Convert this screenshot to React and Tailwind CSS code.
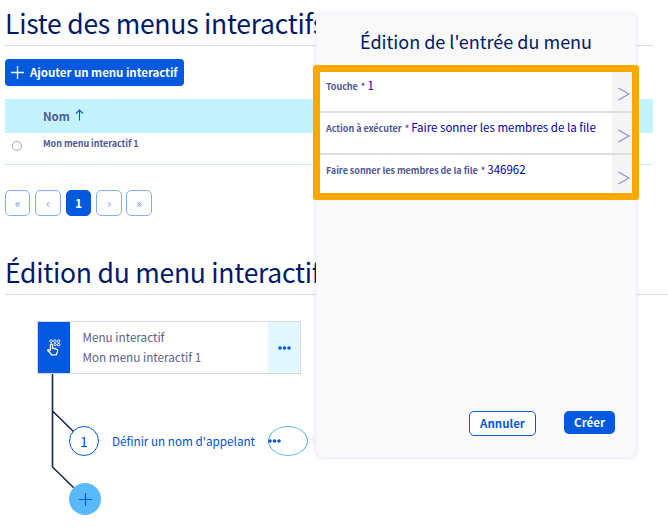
import React from "react";

function Dots() {
  return (
    <svg width="13" height="4" viewBox="0 0 13 4" fill="#0059de">
      <circle cx="2" cy="2" r="1.8" />
      <circle cx="6.5" cy="2" r="1.8" />
      <circle cx="11" cy="2" r="1.8" />
    </svg>
  );
}

function Keypad() {
  return (
    <svg width="14" height="17" viewBox="0 0 14 17" fill="none" stroke="white" strokeWidth="1">
      <rect x="3" y=".9" width="2.4" height="2.4" rx=".8" />
      <rect x="6.700" y=".9" width="2.4" height="2.4" rx=".8" />
      <rect x="10.400" y=".9" width="2.4" height="2.4" rx=".8" />
      <rect x="7" y="4.500" width="2.200" height="2.200" rx=".8" />
      <rect x="10.400" y="4.500" width="2.4" height="2.4" rx=".8" />
      <path d="M3.400 11.500V6c0-1.500 2-1.500 2 0v3.300c1.400-.3 1.800 0 2 .5 1.200-.3 1.600 0 1.800.6 1.100-.1 1.400.4 1.400 1.100 0 1.600-.4 2.300-1 3v1.400H4.100v-1.200L.9 11.700c-.5-1 .7-1.600 1.500-.8z" strokeWidth="1.200" strokeLinejoin="round" />
    </svg>
  );
}

function Page({ children, active, className }) {
  return (
    <div
      className={
        "flex h-[26px] items-center justify-center rounded-[5px] border leading-none " +
        (active
          ? "border-[#0059de] bg-[#0059de] text-[12px] font-bold text-white "
          : "border-[#85aef0] bg-white text-[12px] text-[#6b95e8] ") +
        className
      }
    >
      {children}
    </div>
  );
}

function Field({ label, value, className }) {
  return (
    <div className={"flex justify-between bg-white " + className}>
      <div className="flex items-baseline gap-[2px] pl-[7px] pt-[4px] leading-[20px] whitespace-nowrap">
        <span className="text-[9px] font-bold tracking-[-0.03px] text-[#4f5896]">
          {label} <span className="ml-[1px]">*</span>
        </span>
        <span className="text-[11.5px] text-[#0000a5]">{value}</span>
      </div>
      <div className="flex w-[21px] justify-center bg-[#f5f5f5] pt-[16px] pl-[2px]">
        <svg width="12" height="14" viewBox="0 0 12 14" fill="none" stroke="#858bd0" strokeWidth="1.100">
          <path d="M.5 1 11 7 .5 13" />
        </svg>
      </div>
    </div>
  );
}

export default function App() {
  return (
    <div className="relative h-[532px] w-[668px] overflow-hidden bg-white font-['Noto_Sans_CJK_SC',sans-serif] text-[#001a69]">
      <main className="pl-[5px]">
        <h1 className="h-[46px] w-[648px] border-b border-[#dddddf] text-[26.5px] leading-[45px] tracking-[-0.25px] whitespace-nowrap">
          Liste des menus interactifs
        </h1>
        <button className="mt-[13px] flex h-[27px] w-[179px] items-center rounded-[4px] bg-[#0059de] pl-[6px] text-[11.5px] font-bold tracking-[-0.05px] whitespace-nowrap text-white">
          <svg width="13" height="13" viewBox="0 0 13 13" stroke="white" strokeWidth="1.300" className="mr-[6px]">
            <path d="M0 6.500h13M6.500 0v13" />
          </svg>
          <span className="leading-[29px]">Ajouter un menu interactif</span>
        </button>

        <section className="mt-[13px] w-[648px]">
          <div className="flex h-[34px] bg-[#c4f3ff] pl-[38px]">
            <span className="text-[11.5px] leading-[34px] font-bold text-[#4f5896]">Nom</span>
            <svg width="9" height="12" viewBox="0 0 9 12" fill="none" stroke="#0059de" strokeWidth="1.100" className="mt-[10px] ml-[5px]">
              <path d="M4.500 11.500V1M1 4.500 4.500 1 8 4.500" />
            </svg>
          </div>
          <div className="flex h-[32px] border-b border-[#c4f3ff] pl-[7px]">
            <div className="mt-[8px] h-[10px] w-[10px] rounded-full border border-[#aaa]" />
            <span className="ml-[21px] text-[9px] leading-[21px] font-bold tracking-[-0.06px] whitespace-nowrap text-[#4f5896]">
              Mon menu interactif 1
            </span>
          </div>
        </section>

        <nav className="mt-[25px] flex">
          <Page className="w-[25px]">«</Page>
          <Page className="ml-[5px] w-[26px]">‹</Page>
          <Page active className="ml-[5px] w-[25px]">1</Page>
          <Page className="ml-[5px] w-[26px]">›</Page>
          <Page className="ml-[4px] w-[26px]">»</Page>
        </nav>

        <h1 className="mt-[33px] h-[46px] border-b border-[#dddddf] text-[26.5px] leading-[45px] tracking-[-0.25px] whitespace-nowrap">
          Édition du menu interactif
        </h1>

        <section className="mt-[26px] ml-[32px]">
          <div className="flex h-[53px] w-[264px] border border-[#d5dbe1]">
            <div className="flex w-[32px] items-center justify-center bg-[#0059de]">
              <Keypad />
            </div>
            <div className="flex-1 pt-[5px] pl-[12.5px] text-[11.7px] leading-[20px] whitespace-nowrap text-[#5a6285]">
              <p>Menu interactif</p>
              <p>Mon menu interactif 1</p>
            </div>
            <div className="flex w-[32px] items-center justify-center bg-[#e2f6fd]">
              <Dots />
            </div>
          </div>
          <div className="flex">
            <svg width="37" height="118" viewBox="0 0 37 118" fill="none" stroke="#122844" strokeWidth="1.600">
              <path d="M15.500 0V93L37 114M15.500 37 37 58" />
            </svg>
            <div className="-ml-[5px] pt-[52px]">
              <div className="flex items-center">
                <div className="flex h-[30px] w-[30px] items-center justify-center rounded-full border border-[#0059de] bg-white text-[14px] leading-none text-[#0050d7]">
                  1
                </div>
                <span className="ml-[13px] w-[156px] text-[11.7px] leading-[30px] whitespace-nowrap text-[#0050d7]">
                  Définir un nom d'appelant
                </span>
                <div className="flex h-[30px] w-[40px] items-center rounded-[50%] border border-[#59b5f5]">
                  <span className="-ml-[1px]">
                    <Dots />
                  </span>
                </div>
              </div>
              <div className="mt-[27px] flex h-[32px] w-[32px] items-center justify-center rounded-full bg-[#59b9fb]">
                <svg width="13" height="13" viewBox="0 0 13 13" stroke="#0059de" strokeWidth="1.200">
                  <path d="M0 6.500h13M6.500 0v13" />
                </svg>
              </div>
            </div>
          </div>
        </section>
      </main>

      <aside className="absolute top-[14px] left-[316px] h-[443px] w-[320px] rounded-[6px] bg-[#f9f9f9] shadow-[0_0_5px_rgba(70,70,190,0.2)]">
        <svg width="7" height="14" viewBox="0 0 7 14" className="absolute top-[418px] -left-[6px]">
          <path d="M7 0 0 7l7 7z" fill="#f0f0fa" />
        </svg>
        <h2 className="h-[57px] text-center text-[18px] leading-[55px] whitespace-nowrap">
          Édition de l'entrée du menu
        </h2>
        <div className="mx-[3px] space-y-[2px] bg-[#dedede]">
          <Field className="h-[40px]" label="Touche" value="1" />
          <Field className="h-[40px]" label="Action à exécuter" value="Faire sonner les membres de la file" />
          <Field className="h-[39px]" label="Faire sonner les membres de la file" value="346962" />
        </div>
        <div className="mt-[217px] flex items-start pl-[153px]">
          <button className="h-[25px] w-[67px] rounded-[5px] border border-[#0059de] bg-white text-[11.5px] leading-[23px] font-bold text-[#0059de]">
            Annuler
          </button>
          <button className="ml-[28px] h-[23px] w-[51px] rounded-[5px] bg-[#0059de] text-[11.5px] leading-[23px] font-bold text-white">
            Créer
          </button>
        </div>
        <div className="absolute top-[51px] -left-[3px] h-[135px] w-[326px] rounded-[3px] border-[7px] border-[#ffa800]" />
      </aside>
    </div>
  );
}
